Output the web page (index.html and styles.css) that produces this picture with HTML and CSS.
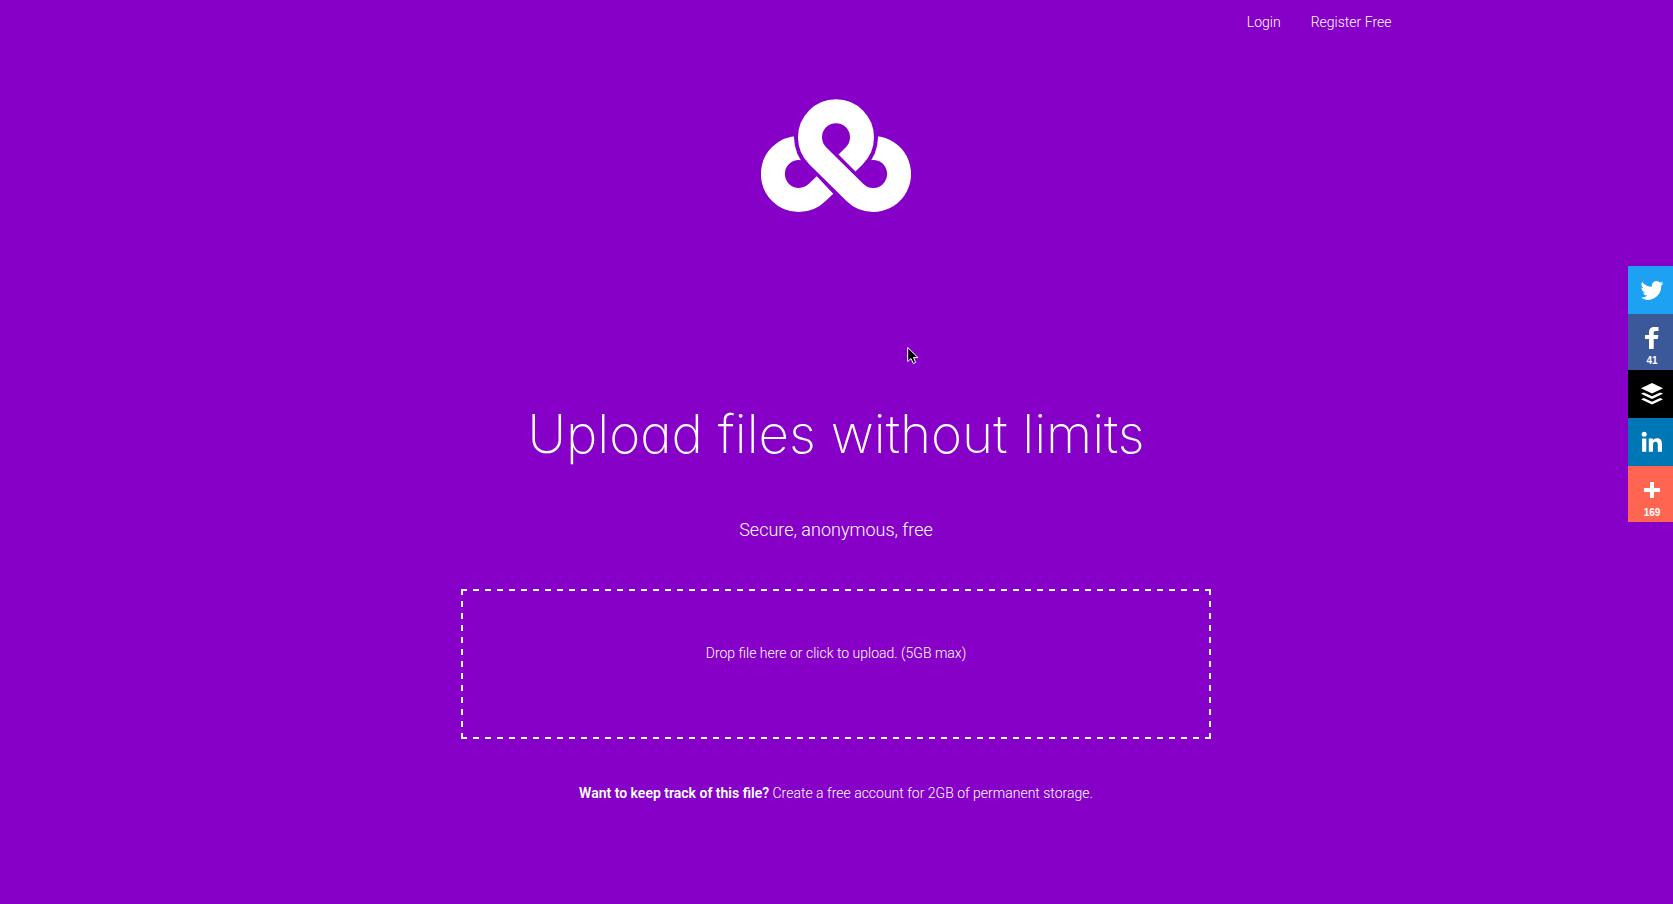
FILE: index.html
```html
<!DOCTYPE html>
<html lang="en">
<head>
<meta charset="utf-8">
<title>Upload files without limits</title>
<link rel="stylesheet" href="styles.css">
</head>
<body>
<header class="topbar">
  <nav class="nav">
    <a href="#login">Login</a>
    <a href="#register">Register Free</a>
  </nav>
</header>
<main class="hero">
  <svg class="logo" viewBox="63 56 450 340" role="img" aria-label="Cloud knot logo">
    <mask id="gap" maskUnits="userSpaceOnUse" x="0" y="0" width="570" height="450">
      <rect width="570" height="450" fill="#fff"/>
      <circle cx="288" cy="171" r="126" fill="#000"/>
    </mask>
    <g fill="none" stroke="#fff" stroke-width="72">
      <path d="M321 248L343 226A78 78 0 1 0 233 226L344 336A78 78 0 0 0 399 359"/>
      <g mask="url(#gap)">
        <path d="M255 314L232 336A78 78 0 1 1 232 226"/>
        <path d="M398 359A78 78 0 1 0 344 226"/>
      </g>
    </g>
  </svg>
  <h1 class="title">Upload files without limits</h1>
  <p class="subtitle">Secure, anonymous, free</p>
  <button class="dropzone" type="button">Drop file here or click to upload. (5GB max)</button>
  <p class="note"><strong>Want to keep track of this file?</strong> Create a free account for 2GB of permanent storage.</p>
</main>
<aside class="share" aria-label="Share">
  <a class="share-item twitter" href="#twitter" aria-label="Twitter">
    <svg viewBox="0 0 24 24"><path d="M23.5 5.2a9 9 0 0 1-2.7.8 4.700 4.700 0 0 0 2.100-2.600 9 9 0 0 1-3 1.100 4.700 4.700 0 0 0-8 4.300A13.400 13.400 0 0 1 2.200 3.900a4.700 4.700 0 0 0 1.500 6.300 4.700 4.700 0 0 1-2.200-.6 4.700 4.700 0 0 0 3.800 4.700 4.700 4.700 0 0 1-2.100.1 4.700 4.700 0 0 0 4.400 3.200A9.500 9.500 0 0 1 .6 19.600a13.400 13.400 0 0 0 20.600-12A9 9 0 0 0 23.500 5.200z"/></svg>
  </a>
  <a class="share-item facebook" href="#facebook" aria-label="Facebook, 41 shares">
    <svg viewBox="0 0 24 24"><path d="M9 23V13H5V9H9V6.500C9 2.800 11 1 14.500 1H18.500V5H16C14.300 5 13.700 5.600 13.700 7V9H18.400L17.800 13H13.700V23z"/></svg>
    <span>41</span>
  </a>
  <a class="share-item buffer" href="#buffer" aria-label="Buffer">
    <svg viewBox="0 0 24 24"><path d="M12 1L23 6.300 12 11.600 1 6.300z"/><path d="M1 11.700L3.800 10.400 12 14.300 20.200 10.400 23 11.700 12 17z"/><path d="M1 17.200L3.800 15.900 12 19.800 20.200 15.900 23 17.200 12 22.500z"/></svg>
  </a>
  <a class="share-item linkedin" href="#linkedin" aria-label="LinkedIn">
    <svg viewBox="0 0 24 24"><circle cx="4.200" cy="4.300" r="2.500"/><path d="M2.100 8.500H6.300V21.700H2.100zM8.800 8.500H12.800V10.300C13.700 8.900 15 8.200 16.900 8.200 21 8.200 22 10.800 22 14.500V21.700H17.800V15.200C17.800 13.200 17.500 11.800 15.600 11.800 13.600 11.800 13 13.300 13 15.200V21.700H8.800z"/></svg>
  </a>
  <a class="share-item more" href="#more" aria-label="More, 169 shares">
    <svg viewBox="0 0 24 24"><path d="M10 4H14V10H20V14H14V20H10V14H4V10H10z"/></svg>
    <span>169</span>
  </a>
</aside>
<svg class="cursor" viewBox="0 0 12 19" aria-hidden="true"><path d="M.7 1.500V15.500L4 12.500 6.300 17.500 8.700 16.500 6.500 11.600H11z" fill="#000" stroke="#fff"/></svg>
</body>
</html>
```
FILE: styles.css
```css
* {
  box-sizing: border-box;
}

body {
  margin: 0;
  min-height: 100vh;
  background: #8600c7;
  color: #fff;
  font: 300 14px/20px Roboto, sans-serif;
}

.topbar {
  max-width: 1170px;
  margin: 0 auto;
  padding: 12px 30px;
}

.nav {
  display: flex;
  justify-content: flex-end;
  gap: 30px;
}

.nav a {
  color: inherit;
  text-decoration: none;
}

.hero {
  display: flex;
  flex-direction: column;
  align-items: center;
  max-width: 781px;
  margin: 0 auto;
  padding: 55px 16px 48px 15px;
  text-align: center;
}

.logo {
  width: 150px;
}

.title {
  margin: 186px 0 0;
  font: 200 53px/72px Inter, sans-serif;
  font-feature-settings: "cv11";
  white-space: nowrap;
}

.subtitle {
  margin: 48px 0 0;
  font-size: 18px;
  line-height: 24px;
}

.dropzone {
  --dash: #fff 0 6px, transparent 6px 12px;
  width: 100%;
  height: 150px;
  margin: 47px 0 0;
  padding: 0 0 22px;
  border: 0;
  background:
    repeating-linear-gradient(90deg, var(--dash)) top / 100% 2px no-repeat,
    repeating-linear-gradient(90deg, var(--dash)) bottom / 100% 2px no-repeat,
    repeating-linear-gradient(var(--dash)) left / 2px 100% no-repeat,
    repeating-linear-gradient(var(--dash)) right / 2px 100% no-repeat;
  color: inherit;
  font: inherit;
  cursor: pointer;
}

.note {
  margin: 44px 0 0;
}

.note strong {
  font-weight: 600;
}

.share {
  position: fixed;
  top: 266px;
  right: 0;
  width: 45px;
}

.share-item {
  display: flex;
  flex-direction: column;
  align-items: center;
  padding: 12px 0 12px 3px;
  color: #fff;
  font: 700 10px/12px "Liberation Sans", Arial, sans-serif;
  text-decoration: none;
}

.share-item svg {
  width: 24px;
  height: 24px;
  fill: currentColor;
}

.share-item span {
  margin: 5px 0 -9px;
}

.twitter {
  background: #1da1f2;
}

.facebook {
  background: #3b5998;
}

.buffer {
  background: #000;
}

.linkedin {
  background: #0077b5;
}

.more {
  background: #ff6550;
}

.cursor {
  position: absolute;
  top: 346px;
  left: 907px;
  width: 12px;
  height: 19px;
}
```
